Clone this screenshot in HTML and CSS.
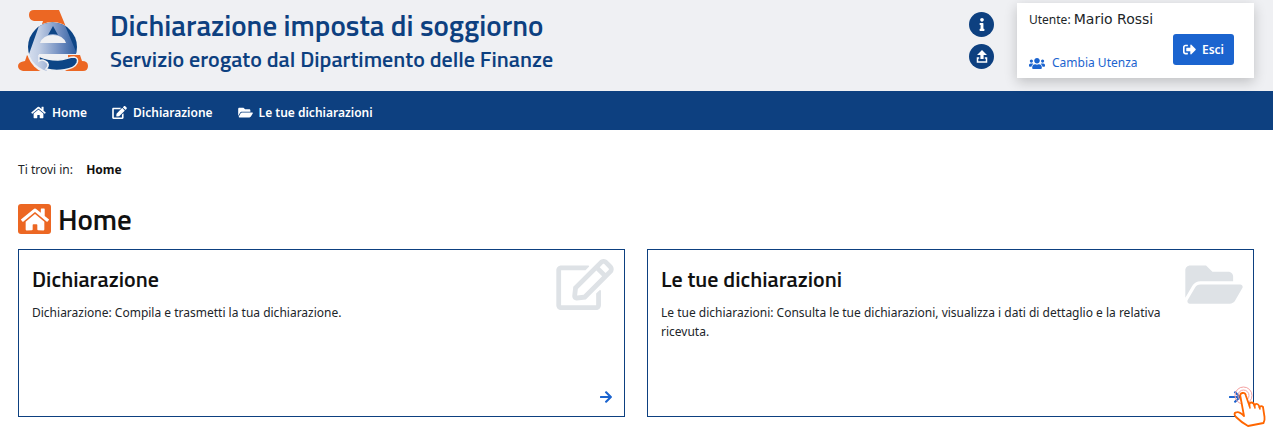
FILE: index.html
```html
<!DOCTYPE html>
<html lang="it">
<head>
<meta charset="utf-8">
<meta name="viewport" content="width=device-width, initial-scale=1">
<title>Dichiarazione imposta di soggiorno</title>
<link rel="stylesheet" href="styles.css">
</head>
<body>
<svg class="sprite" aria-hidden="true">
  <symbol id="home" viewBox="0 0 576 512"><path d="M280.37 148.26L96 300.11V464a16 16 0 0 0 16 16l112.06-.29a16 16 0 0 0 15.92-16V368a16 16 0 0 1 16-16h64a16 16 0 0 1 16 16v95.64a16 16 0 0 0 16 16.05L464 480a16 16 0 0 0 16-16V300L295.67 148.26a12.19 12.19 0 0 0-15.3 0zM571.6 251.47L488 182.56V44.05a12 12 0 0 0-12-12h-56a12 12 0 0 0-12 12v72.61L318.47 43a48 48 0 0 0-61 0L4.34 251.47a12 12 0 0 0-1.6 16.9l25.5 31A12 12 0 0 0 45.15 301l235.22-193.74a12.19 12.19 0 0 1 15.3 0L530.9 301a12 12 0 0 0 16.9-1.6l25.5-31a12 12 0 0 0-1.7-16.93z"/></symbol>
  <symbol id="edit" viewBox="0 0 576 512"><path d="M402.6 83.2l90.2 90.2c3.8 3.8 3.8 10 0 13.8L274.4 405.6l-92.8 10.3c-12.4 1.4-22.9-9.1-21.5-21.5l10.3-92.8L388.8 83.2c3.8-3.8 10-3.8 13.8 0zm162-22.9l-48.8-48.8c-15.2-15.2-39.9-15.2-55.2 0l-35.4 35.4c-3.8 3.8-3.8 10 0 13.8l90.2 90.2c3.8 3.8 10 3.8 13.8 0l35.4-35.4c15.2-15.3 15.2-40 0-55.2zM384 346.2V448H64V128h229.8c3.2 0 6.2-1.3 8.5-3.5l40-40c7.6-7.6 2.2-20.5-8.5-20.5H48C21.5 64 0 85.5 0 112v352c0 26.5 21.5 48 48 48h352c26.5 0 48-21.5 48-48V306.2c0-10.7-12.9-16-20.5-8.5l-40 40c-2.2 2.3-3.5 5.3-3.5 8.5z"/></symbol>
  <symbol id="edit-outline" viewBox="0 0 576 512"><path d="M402.3 344.9l32-32c5-5 13.7-1.5 13.7 5.7V464c0 26.5-21.5 48-48 48H48c-26.5 0-48-21.5-48-48V112c0-26.5 21.5-48 48-48h273.5c7.1 0 10.7 8.6 5.7 13.7l-32 32c-1.5 1.5-3.5 2.3-5.7 2.3H48v352h352V350.5c0-2.1.8-4.1 2.3-5.6zm156.6-201.8L296.3 405.7l-90.4 10c-26.2 2.9-48.5-19.2-45.6-45.6l10-90.4L432.9 17.1c22.9-22.9 59.9-22.9 82.7 0l43.2 43.2c22.9 22.9 22.9 60 .1 82.8zM460.1 174L402 115.9 216.2 301.8l-7.3 65.3 65.3-7.3L460.1 174zm64.8-79.7l-43.2-43.2c-4.1-4.1-10.8-4.1-14.8 0L436 82l58.1 58.1 30.9-30.9c4-4.2 4-10.8-.1-14.9z"/></symbol>
  <symbol id="folder" viewBox="0 0 576 512"><path d="M572.694 292.093L500.27 416.248A63.997 63.997 0 0 1 444.989 448H45.025c-18.523 0-30.064-20.093-20.731-36.093l72.424-124.155A64 64 0 0 1 152 256h399.964c18.523 0 30.064 20.093 20.73 36.093zM152 224h328v-48c0-26.51-21.49-48-48-48H272l-64-64H48C21.49 64 0 85.49 0 112v278.046l69.077-118.418C86.214 242.25 117.989 224 152 224z"/></symbol>
  <symbol id="arrow" viewBox="0 0 448 512"><path d="M190.5 66.9l22.2-22.2c9.4-9.4 24.6-9.4 33.9 0L441 239c9.4 9.4 9.4 24.6 0 33.9L246.6 467.3c-9.4 9.4-24.6 9.4-33.9 0l-22.2-22.2c-9.5-9.5-9.3-25 .4-34.3L311.4 296H24c-13.3 0-24-10.7-24-24v-32c0-13.3 10.7-24 24-24h287.4L190.9 101.2c-9.8-9.3-10-24.8-.4-34.3z"/></symbol>
  <symbol id="exit" viewBox="0 0 512 512"><path d="M497 273L329 441c-15 15-41 4.5-41-17v-96H152c-13.3 0-24-10.7-24-24v-96c0-13.3 10.7-24 24-24h136V88c0-21.4 25.9-32 41-17l168 168c9.3 9.4 9.3 24.6 0 34zM192 436v-40c0-6.6-5.4-12-12-12H96c-17.7 0-32-14.3-32-32V160c0-17.7 14.3-32 32-32h84c6.6 0 12-5.4 12-12V76c0-6.6-5.4-12-12-12H96c-53 0-96 43-96 96v192c0 53 43 96 96 96h84c6.6 0 12-5.4 12-12z"/></symbol>
  <symbol id="users" viewBox="0 0 640 512"><path d="M96 224c35.3 0 64-28.7 64-64s-28.7-64-64-64-64 28.7-64 64 28.7 64 64 64zm448 0c35.3 0 64-28.7 64-64s-28.7-64-64-64-64 28.7-64 64 28.7 64 64 64zm32 32h-64c-17.6 0-33.5 7.1-45.1 18.6 40.3 22.1 68.9 62 75.1 109.4h66c17.7 0 32-14.3 32-32v-32c0-35.3-28.7-64-64-64zm-256 0c61.9 0 112-50.1 112-112S381.9 32 320 32 208 82.1 208 144s50.1 112 112 112zm76.8 32h-8.3c-20.8 10-43.9 16-68.5 16s-47.6-6-68.5-16h-8.3C179.6 288 128 339.6 128 403.2V432c0 26.5 21.5 48 48 48h288c26.5 0 48-21.5 48-48v-28.8c0-63.6-51.6-115.2-115.2-115.2zm-223.7-13.4C161.5 263.1 145.6 256 128 256H64c-35.3 0-64 28.7-64 64v32c0 17.7 14.3 32 32 32h65.9c6.3-47.4 34.9-87.3 75.2-109.4z"/></symbol>
  <symbol id="info" viewBox="0 0 192 512"><path d="M20 424.229h20V279.771H20c-11.046 0-20-8.954-20-20V212c0-11.046 8.954-20 20-20h112c11.046 0 20 8.954 20 20v212.229h20c11.046 0 20 8.954 20 20V492c0 11.046-8.954 20-20 20H20c-11.046 0-20-8.954-20-20v-47.771c0-11.046 8.954-20 20-20zM96 0C56.235 0 24 32.235 24 72s32.235 72 72 72 72-32.235 72-72S135.764 0 96 0z"/></symbol>
  <symbol id="upload" viewBox="0 0 12 13"><path d="M6 0L11 5H7.6V9H4.4V5H1z"/><path d="M3.2 8H1.5v4h9V8H8.8" fill="none" stroke="currentColor" stroke-width="1.5"/></symbol>
</svg>

<header class="header">
  <svg class="logo" viewBox="0 0 70 64" role="img" aria-label="Agenzia delle Entrate">
    <defs>
      <linearGradient id="letter"><stop offset="0" stop-color="#dfe6f2"/><stop offset=".3" stop-color="#c0cde4"/><stop offset=".7" stop-color="#6d8bbf"/><stop offset="1" stop-color="#2b5c9f"/></linearGradient>
      <clipPath id="disc"><circle cx="34.500" cy="38" r="24.500"/></clipPath>
    </defs>
    <path fill="#ec6723" d="M16 1H41L48 18H23L25 12H16Q11 11 11 6T16 1zM9 46L26 62H5Q0 61 0 57T7 52zM50 46H62L64 52Q70 52 70 57T65 62H46z"/>
    <circle cx="34.500" cy="39" r="26" fill="#eff0f3"/>
    <g clip-path="url(#disc)">
      <path fill="#0d4586" d="M8 12H62V45H8z"/>
      <path fill="url(#letter)" d="M22 14H46L59 45H22L21 48 28 53Q32 58 27 64H5V55L11 45z"/>
      <path fill="#0d4586" d="M35 17L30 26Q35 24 40 26z"/>
    </g>
    <path fill="#eff0f3" d="M22 34Q25 26 35 26T48 34z"/>
    <path fill="#ec6723" d="M50 46H60L62 52 58 60 50 58z"/>
    <path fill="#0d4586" stroke="#eff0f3" stroke-width="1.500" d="M21 47Q29 51 40 51C48 51 50 48 56 48Q61 49 59 54C56 61 39 63 28 60Q33 55 27 52 24 50 21 52z"/>
    <path fill="#eff0f3" d="M21 45H50V47Q43 51 33 50 25 50 21 47z"/>
  </svg>
  <div class="titles">
    <h1 class="title">Dichiarazione imposta di soggiorno</h1>
    <p class="subtitle">Servizio erogato dal Dipartimento delle Finanze</p>
  </div>
  <div class="tools">
    <button class="round" aria-label="Informazioni"><svg class="glyph-info"><use href="#info"/></svg></button>
    <button class="round" aria-label="Carica"><svg class="glyph-upload"><use href="#upload"/></svg></button>
  </div>
  <section class="user">
    <div class="user-info">
      <p class="user-line">Utente: <span class="user-name">Mario Rossi</span></p>
      <a class="switch" href="#"><svg class="glyph-users"><use href="#users"/></svg>Cambia Utenza</a>
    </div>
    <button class="exit"><svg class="glyph-exit"><use href="#exit"/></svg>Esci</button>
  </section>
</header>

<nav class="nav">
  <a class="nav-link" href="#"><svg class="glyph-nav"><use href="#home"/></svg>Home</a>
  <a class="nav-link" href="#"><svg class="glyph-nav"><use href="#edit"/></svg>Dichiarazione</a>
  <a class="nav-link" href="#"><svg class="glyph-nav"><use href="#folder"/></svg>Le tue dichiarazioni</a>
</nav>

<main class="main">
  <p class="crumbs">Ti trovi in: <strong class="crumb-current">Home</strong></p>
  <h2 class="page-title"><span class="badge"><svg class="glyph-badge"><use href="#home"/></svg></span>Home</h2>
  <div class="cards">
    <article class="card">
      <div class="card-top">
        <div class="card-copy">
          <h3 class="card-title">Dichiarazione</h3>
          <p class="card-text">Dichiarazione: Compila e trasmetti la tua dichiarazione.</p>
        </div>
        <svg class="glyph-card"><use href="#edit-outline"/></svg>
      </div>
      <a class="go" href="#" aria-label="Apri Dichiarazione"><svg class="glyph-arrow"><use href="#arrow"/></svg></a>
    </article>
    <article class="card">
      <div class="card-top">
        <div class="card-copy">
          <h3 class="card-title">Le tue dichiarazioni</h3>
          <p class="card-text">Le tue dichiarazioni: Consulta le tue dichiarazioni, visualizza i dati di dettaglio e la relativa ricevuta.</p>
        </div>
        <svg class="glyph-card"><use href="#folder"/></svg>
      </div>
      <a class="go" href="#" aria-label="Apri Le tue dichiarazioni"><svg class="glyph-arrow"><use href="#arrow"/></svg></a>
      <svg class="hand" viewBox="0 0 34 42" aria-hidden="true">
        <g fill="none" stroke="#f4a0a0"><circle cx="11.500" cy="9.500" r="8.500"/><circle cx="11.500" cy="9.500" r="5.500"/></g>
        <path fill="#fff" stroke="#f60" stroke-width="1.800" stroke-linejoin="round" d="M8.500 11Q7.500 7.500 10.500 7T14 10L17.500 20Q17 16.500 19.500 16.500T22.500 20Q23 17.500 25 18T27.500 21.500Q29 19 31 21L32.500 31Q33 34 31.500 37L16 40Q9 36 4 31 1 27 4 26.500 7 25 12 30z"/>
        <path fill="none" stroke="#f60" stroke-width="1.500" stroke-linecap="round" d="M17.500 20L18 22M22.500 20L23 22M27.500 21.500L28 23"/>
      </svg>
    </article>
  </div>
</main>
</body>
</html>
```

FILE: styles.css
```css
* { box-sizing: border-box; }
body {
  margin: 0;
  background: #fff;
  color: #212529;
  font: 12px/19px "Noto Sans", sans-serif;
}
h1, h2, h3, p { margin: 0; }
a { text-decoration: none; }
button { border: 0; padding: 0; font: inherit; cursor: pointer; }
svg { display: block; fill: currentColor; flex: none; }
.sprite { position: absolute; width: 0; height: 0; }

.header {
  display: flex;
  align-items: flex-start;
  min-height: 91px;
  padding: 3px 19px 13px 18px;
  background: #eff0f3;
  color: #0d4080;
}
.logo { width: 70px; height: 64px; margin-top: 6px; }
.titles { flex: 1; margin-left: 22px; font-family: "Titillium Web", Roboto, sans-serif; }
.title { font-size: 29px; line-height: 36px; font-weight: 600; margin-top: 4px; }
.subtitle { font-size: 22px; line-height: 32px; font-weight: 600; }
.tools { display: grid; gap: 7px; margin: 9px 23px 0 0; }
.round {
  display: grid;
  place-items: center;
  width: 25px;
  height: 25px;
  border-radius: 50%;
  background: #0d4080;
  color: #fff;
}
.glyph-info { width: 6px; height: 13px; }
.glyph-upload { width: 12px; height: 13px; }
.user {
  display: flex;
  justify-content: space-between;
  align-items: flex-end;
  width: 237px;
  padding: 7px 20px 5px 12px;
  background: #fff;
  box-shadow: 0 4px 12px rgba(0, 0, 0, .2);
}
.user-info { display: grid; gap: 23px; }
.user-line { color: #212529; line-height: 20px; }
.user-name { font: 14px/18px "DejaVu Sans", sans-serif; }
.switch { display: flex; align-items: center; gap: 7px; color: #1b64cf; line-height: 20px; }
.glyph-users { width: 16px; height: 13px; }
.exit {
  display: flex;
  align-items: center;
  justify-content: center;
  gap: 6px;
  width: 61px;
  height: 31px;
  margin-bottom: 8px;
  border-radius: 3px;
  background: #1b64cf;
  color: #fff;
  font-weight: 600;
}
.glyph-exit { width: 13px; height: 13px; }

.nav {
  display: flex;
  gap: 25px;
  min-height: 39px;
  padding: 3px 31px 0;
  background: #0d4080;
}
.nav-link { display: flex; align-items: center; gap: 6px; color: #fff; font-weight: 600; }
.glyph-nav { width: 15px; height: 13px; }

.main { padding: 30px 19px 16px 18px; }
.crumb-current { margin-left: 10px; color: #111; }
.page-title {
  display: flex;
  align-items: center;
  gap: 7px;
  margin: 21px 0 11px;
  color: #111;
  font: 600 29px/38px "Titillium Web", Roboto, sans-serif;
}
.badge {
  display: grid;
  place-items: center;
  width: 33px;
  height: 30px;
  border-radius: 3px;
  background: #ec6723;
  color: #fff;
}
.glyph-badge { width: 28px; height: 25px; }
.cards { display: grid; grid-template-columns: 1fr 1fr; gap: 22px; }
.card {
  position: relative;
  display: flex;
  flex-direction: column;
  justify-content: space-between;
  min-height: 168px;
  padding: 9px 10px 12px 13px;
  border: 1px solid #0d4080;
}
.card-top { display: flex; gap: 20px; }
.card-copy { flex: 1; padding-top: 5px; }
.card-title { color: #111; font: 600 22px/30px "Titillium Web", Roboto, sans-serif; }
.card-text { margin-top: 9px; }
.glyph-card { width: 58px; height: 51px; color: #dee2e6; }
.go { align-self: flex-end; padding: 0 2px; color: #1b64cf; }
.glyph-arrow { width: 12px; height: 14px; }
.hand { position: absolute; right: -13px; bottom: -12px; width: 34px; height: 42px; }
```
